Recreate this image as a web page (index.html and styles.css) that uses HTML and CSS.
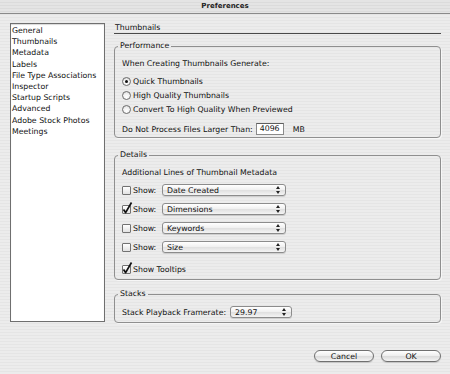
FILE: index.html
```html
<!DOCTYPE html>
<html lang="en">
  <head>
    <meta charset="UTF-8" />
    <meta name="viewport" content="width=device-width, initial-scale=1.0" />
    <title>Preferences</title>
    <link rel="stylesheet" href="styles.css">
  </head>
  <body>
    <div class="window">
      <div class="titlebar">Preferences</div>

      <div class="main">
        <!-- Category list -->
        <ul class="sidebar">
          <li>General</li>
          <li>Thumbnails</li>
          <li>Metadata</li>
          <li>Labels</li>
          <li>File Type Associations</li>
          <li>Inspector</li>
          <li>Startup Scripts</li>
          <li>Advanced</li>
          <li>Adobe Stock Photos</li>
          <li>Meetings</li>
        </ul>

        <div class="pane">
          <div class="pane-title">Thumbnails</div>

          <fieldset class="group group-performance">
            <legend>Performance</legend>
            <div class="row">When Creating Thumbnails Generate:</div>
            <div class="row row-first">
              <span class="radio"><span class="radio-dot"></span></span>
              <span class="option">Quick Thumbnails</span>
            </div>
            <div class="row">
              <span class="radio"></span>
              <span class="option">High Quality Thumbnails</span>
            </div>
            <div class="row">
              <span class="radio"></span>
              <span class="option">Convert To High Quality When Previewed</span>
            </div>
            <div class="row row-process">
              Do Not Process Files Larger Than:
              <span class="field">4096</span>
              <span class="unit">MB</span>
            </div>
          </fieldset>

          <fieldset class="group group-details">
            <legend>Details</legend>
            <div class="row">Additional Lines of Thumbnail Metadata</div>
            <div class="row row-first">
              <span class="check"></span>
              <span class="show-label">Show:</span>
              <div class="popup popup-wide"><span>Date Created</span><svg class="arrows" width="4" height="8" viewBox="0 0 4 8"><polygon points="2,0 4,3 0,3" /><polygon points="0,5 4,5 2,8" /></svg></div>
            </div>
            <div class="row row-meta">
              <span class="check"><svg class="tick" width="9" height="9" viewBox="0 0 9 9"><path d="M1.5 4.5 L3.6 7.6 L9.5 -2.5" /></svg></span>
              <span class="show-label">Show:</span>
              <div class="popup popup-wide"><span>Dimensions</span><svg class="arrows" width="4" height="8" viewBox="0 0 4 8"><polygon points="2,0 4,3 0,3" /><polygon points="0,5 4,5 2,8" /></svg></div>
            </div>
            <div class="row row-meta">
              <span class="check"></span>
              <span class="show-label">Show:</span>
              <div class="popup popup-wide"><span>Keywords</span><svg class="arrows" width="4" height="8" viewBox="0 0 4 8"><polygon points="2,0 4,3 0,3" /><polygon points="0,5 4,5 2,8" /></svg></div>
            </div>
            <div class="row row-meta">
              <span class="check"></span>
              <span class="show-label">Show:</span>
              <div class="popup popup-wide"><span>Size</span><svg class="arrows" width="4" height="8" viewBox="0 0 4 8"><polygon points="2,0 4,3 0,3" /><polygon points="0,5 4,5 2,8" /></svg></div>
            </div>
            <div class="row row-tooltips">
              <span class="check"><svg class="tick" width="9" height="9" viewBox="0 0 9 9"><path d="M1.5 4.5 L3.6 7.6 L9.5 -2.5" /></svg></span>
              <span class="option">Show Tooltips</span>
            </div>
          </fieldset>

          <fieldset class="group group-stacks">
            <legend>Stacks</legend>
            <div class="row">
              Stack Playback Framerate:
              <div class="popup popup-rate"><span>29.97</span><svg class="arrows" width="4" height="8" viewBox="0 0 4 8"><polygon points="2,0 4,3 0,3" /><polygon points="0,5 4,5 2,8" /></svg></div>
            </div>
          </fieldset>
        </div>
      </div>

      <div class="buttons">
        <button type="button">Cancel</button>
        <button type="button">OK</button>
      </div>
    </div>
  </body>
</html>
```

FILE: styles.css
```css
/* Reset */
* {
  margin: 0;
  padding: 0;
  box-sizing: border-box;
  font-family: "DejaVu Sans", Verdana, sans-serif;
}

body {
  color: #111;
  font-size: 7.8px;
  background: repeating-linear-gradient(to bottom, #ececec 0, #ececec 2px, #e5e5e5 2px, #e5e5e5 3px);
}

.window {
  width: 450px;
  height: 374px;
}

.titlebar {
  height: 14px;
  line-height: 13px;
  text-align: center;
  font-size: 7px;
  font-weight: bold;
  color: #222;
  border-bottom: 1px solid #8a8a8a;
  background: repeating-linear-gradient(to bottom, #e4e4e4 0, #e4e4e4 2px, #dbdbdb 2px, #dbdbdb 3px);
}

.main {
  display: flex;
  gap: 9px;
  padding: 9px 0 0 10px;
}

/* Category list */
.sidebar {
  list-style: none;
  width: 95px;
  height: 299px;
  padding: 1px 0 0 1px;
  background-color: #fff;
  border: 1px solid #6f6f6f;
  box-shadow: inset 0 1px 1px rgba(0, 0, 0, 0.15);
}

.sidebar li {
  line-height: 11.2px;
  white-space: nowrap;
}

.pane {
  width: 327px;
}

.pane-title {
  height: 11px;
  line-height: 9px;
  padding-left: 1px;
  border-bottom: 1px solid #4a4a4a;
}

/* Group boxes */
.group {
  min-width: 0;
  border: 1px solid #8f8f8f;
  border-radius: 4px;
  padding: 5px 0 0 7px;
  box-shadow: 1px 1px 0 rgba(255, 255, 255, 0.6);
}

.group legend {
  line-height: 10px;
  padding: 0 2px;
  margin-left: -4px;
}

.group-performance {
  margin-top: 7px;
  padding-bottom: 1px;
}

.group-details {
  margin-top: 12px;
  padding-bottom: 3px;
}

.group-stacks {
  margin-top: 9px;
  padding-top: 6px;
  padding-bottom: 3px;
}

.row {
  display: flex;
  align-items: center;
  height: 14px;
  white-space: nowrap;
}

.row-first {
  margin-top: 4px;
}

.row-meta {
  margin-top: 5px;
}

.row-process {
  margin-top: 6px;
}

.row-tooltips {
  margin-top: 8px;
}

/* Radio buttons */
.radio {
  display: flex;
  align-items: center;
  justify-content: center;
  width: 9px;
  height: 9px;
  border: 1px solid #6d6d6d;
  border-radius: 50%;
  background: radial-gradient(circle at 50% 70%, #ffffff 0, #f2f2f2 50%, #cfcfcf 100%);
}

.radio-dot {
  width: 3px;
  height: 3px;
  border-radius: 50%;
  background-color: #111;
}

.option {
  margin-left: 2px;
}

/* Checkboxes */
.check {
  display: block;
  flex: none;
  width: 9px;
  height: 9px;
  border: 1px solid #727272;
  border-radius: 1px;
  background: linear-gradient(#ffffff, #e2e2e2);
}

.tick {
  display: block;
  margin: -1px 0 0 -1px;
  overflow: visible;
}

.tick path {
  fill: none;
  stroke: #111;
  stroke-width: 1.7;
  stroke-linejoin: round;
}

.show-label {
  width: 29px;
  margin-left: 2px;
}

/* Popup menus */
.popup {
  display: flex;
  align-items: center;
  justify-content: space-between;
  height: 12px;
  padding: 0 5px 0 4px;
  border: 1px solid #8c8c8c;
  border-radius: 3px;
  background: linear-gradient(#ffffff, #f1f1f1 45%, #e1e1e1 55%, #f4f4f4);
  box-shadow: 0 1px 0 rgba(0, 0, 0, 0.12);
}

.popup-wide {
  width: 124px;
}

.popup-rate {
  width: 62px;
  margin-left: 4px;
}

.arrows polygon {
  fill: #222;
}

/* Text field */
.field {
  width: 28px;
  height: 12px;
  line-height: 10px;
  margin-left: 3px;
  padding-left: 3px;
  background-color: #fff;
  border: 1px solid #8a8a8a;
  border-top-color: #5e5e5e;
}

.unit {
  margin-left: 9px;
}

/* Dialog buttons */
.buttons {
  display: flex;
  justify-content: flex-end;
  gap: 7px;
  padding-right: 9px;
  margin-top: 27px;
}

.buttons button {
  width: 60px;
  height: 12px;
  font-size: 7.8px;
  color: #111;
  border: 1px solid #707070;
  border-radius: 6px;
  background: linear-gradient(#ffffff, #efefef 45%, #dcdcdc 55%, #f4f4f4);
  box-shadow: 0 1px 1px rgba(0, 0, 0, 0.15);
}
```
